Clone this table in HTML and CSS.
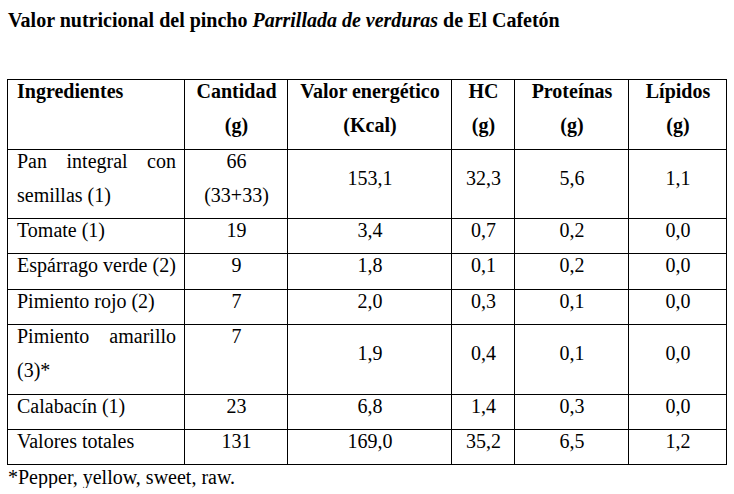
FILE: index.html
```html
<!DOCTYPE html>
<html lang="es">
<head>
<meta charset="utf-8">
<title>Valor nutricional</title>
<link rel="stylesheet" href="styles.css">
</head>
<body>
<p class="title">Valor nutricional del pincho <i>Parrillada de verduras</i> de El Cafetón</p>
<table class="nut">
  <colgroup>
    <col class="c1"><col class="c2"><col class="c3"><col class="c4"><col class="c5"><col class="c6">
  </colgroup>
  <thead>
    <tr>
      <th class="name"><div class="t">Ingredientes</div></th>
      <th><div class="t">Cantidad<br>(g)</div></th>
      <th><div class="t">Valor energético<br>(Kcal)</div></th>
      <th><div class="t">HC<br>(g)</div></th>
      <th><div class="t">Proteínas<br>(g)</div></th>
      <th><div class="t">Lípidos<br>(g)</div></th>
    </tr>
  </thead>
  <tbody>
    <tr>
      <td class="name"><div class="t">Pan integral con semillas (1)</div></td>
      <td class="qty"><div class="t">66<br>(33+33)</div></td>
      <td><div class="t">153,1</div></td>
      <td><div class="t">32,3</div></td>
      <td><div class="t">5,6</div></td>
      <td><div class="t">1,1</div></td>
    </tr>
    <tr>
      <td class="name"><div class="t">Tomate (1)</div></td>
      <td class="qty"><div class="t">19</div></td>
      <td><div class="t">3,4</div></td>
      <td><div class="t">0,7</div></td>
      <td><div class="t">0,2</div></td>
      <td><div class="t">0,0</div></td>
    </tr>
    <tr>
      <td class="name"><div class="t">Espárrago verde (2)</div></td>
      <td class="qty"><div class="t">9</div></td>
      <td><div class="t">1,8</div></td>
      <td><div class="t">0,1</div></td>
      <td><div class="t">0,2</div></td>
      <td><div class="t">0,0</div></td>
    </tr>
    <tr>
      <td class="name"><div class="t">Pimiento rojo (2)</div></td>
      <td class="qty"><div class="t">7</div></td>
      <td><div class="t">2,0</div></td>
      <td><div class="t">0,3</div></td>
      <td><div class="t">0,1</div></td>
      <td><div class="t">0,0</div></td>
    </tr>
    <tr>
      <td class="name"><div class="t">Pimiento amarillo (3)*</div></td>
      <td class="qty"><div class="t">7</div></td>
      <td><div class="t">1,9</div></td>
      <td><div class="t">0,4</div></td>
      <td><div class="t">0,1</div></td>
      <td><div class="t">0,0</div></td>
    </tr>
    <tr>
      <td class="name"><div class="t">Calabacín (1)</div></td>
      <td class="qty"><div class="t">23</div></td>
      <td><div class="t">6,8</div></td>
      <td><div class="t">1,4</div></td>
      <td><div class="t">0,3</div></td>
      <td><div class="t">0,0</div></td>
    </tr>
    <tr>
      <td class="name"><div class="t">Valores totales</div></td>
      <td class="qty"><div class="t">131</div></td>
      <td><div class="t">169,0</div></td>
      <td><div class="t">35,2</div></td>
      <td><div class="t">6,5</div></td>
      <td><div class="t">1,2</div></td>
    </tr>
  </tbody>
</table>
<p class="note">*Pepper, yellow, sweet, raw.</p>
</body>
</html>
```

FILE: styles.css
```css
html, body {
  background: #fff;
}
body {
  margin: 0;
  padding: 0 0 0 7px;
  font-family: "Liberation Serif", "Times New Roman", serif;
  font-size: 20px;
  color: #000;
}
.title {
  margin: 0;
  padding: 9px 0 0 1px;
  line-height: 22px;
  font-weight: bold;
}
.title i {
  font-style: italic;
}
.nut {
  margin-top: 48px;
  border-collapse: collapse;
  table-layout: fixed;
  width: 719px;
}
.c1 { width: 177px; }
.c2 { width: 103px; }
.c3 { width: 164px; }
.c4 { width: 63px; }
.c5 { width: 114px; }
.c6 { width: 98px; }
.nut th,
.nut td {
  border: 1px solid #000;
  padding: 0 8px 0 9px;
  line-height: 34.3px;
  text-align: center;
  vertical-align: middle;
}
.nut th {
  font-weight: bold;
  vertical-align: top;
}
.nut .name {
  text-align: justify;
  vertical-align: top;
}
.nut .qty {
  vertical-align: top;
}
.t {
  margin: -6px 0 6px;
}
.note {
  margin: 1px 0 0 1px;
  line-height: 22px;
}
```
